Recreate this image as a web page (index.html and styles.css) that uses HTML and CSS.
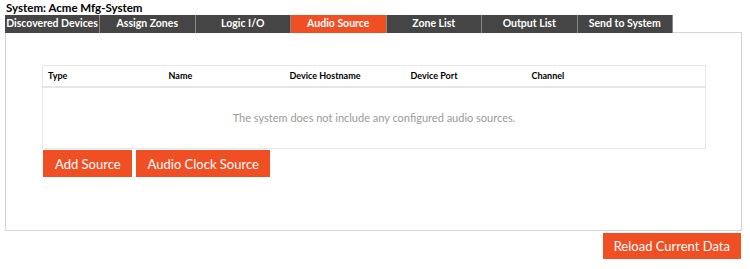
FILE: index.html
```html
<!DOCTYPE html>
<html lang="en">
<head>
  <meta charset="UTF-8" />
  <meta name="viewport" content="width=device-width, initial-scale=1.0" />
  <title>Audio Source</title>
  <link rel="stylesheet" href="styles.css">
</head>
<body>
  <div class="page">
    <div class="system-title">System: Acme Mfg-System</div>
    <nav class="tabs">
      <a href="#" class="tab">Discovered Devices</a>
      <a href="#" class="tab">Assign Zones</a>
      <a href="#" class="tab">Logic I/O</a>
      <a href="#" class="tab active">Audio Source</a>
      <a href="#" class="tab">Zone List</a>
      <a href="#" class="tab">Output List</a>
      <a href="#" class="tab">Send to System</a>
      <div class="tab-fill"></div>
    </nav>
    <section class="panel">
      <table class="sources">
        <thead>
          <tr>
            <th>Type</th>
            <th>Name</th>
            <th>Device Hostname</th>
            <th>Device Port</th>
            <th>Channel</th>
            <th></th>
          </tr>
        </thead>
        <tbody>
          <tr>
            <td colspan="6" class="empty">The system does not include any configured audio sources.</td>
          </tr>
        </tbody>
      </table>
      <div class="actions">
        <button class="btn-primary">Add Source</button>
        <button class="btn-primary">Audio Clock Source</button>
      </div>
    </section>
    <div class="footer">
      <button class="btn-primary reload">Reload Current Data</button>
    </div>
  </div>
</body>
</html>
```

FILE: styles.css
```css
* {
  box-sizing: border-box;
}
body {
  margin: 0;
  font-family: 'Lato', 'Open Sans', sans-serif;
  background-color: #FFFFFF;
  color: #000000;
}
.page {
  padding: 1px 8px 0 5px;
}
.system-title {
  font-size: 11.5px;
  font-weight: 700;
  line-height: 14px;
  padding-left: 1px;
}
.tabs {
  display: flex;
  height: 18px;
}
.tab {
  width: 96.5px;
  flex-shrink: 0;
  background-color: #454545;
  border-left: 1px solid #8A8A8A;
  border-right: 1px solid #8A8A8A;
  margin-right: -1px;
  color: #FFFFFF;
  font-size: 10.5px;
  font-weight: 700;
  line-height: 17px;
  text-align: center;
  text-decoration: none;
  white-space: nowrap;
}
.tab:first-child {
  border-left: none;
  width: 95px;
}
.tab.active {
  background-color: #F04E23;
}
.tab-fill {
  flex: 1;
  border-bottom: 1px solid #D4D4D4;
  margin-left: 1px;
}
.panel {
  border: 1px solid #D4D4D4;
  border-top: none;
  height: 198px;
  padding: 32px 36px 0 36px;
}
.sources {
  width: 664px;
  border-collapse: collapse;
  border: 1px solid #E6E6E6;
}
.sources th {
  width: 121px;
  text-align: left;
  font-size: 9px;
  font-weight: 700;
  padding: 0 5px;
  height: 21px;
  border-bottom: 2px solid #E6E6E6;
}
.sources th:last-child {
  width: auto;
}
.empty {
  height: 62px;
  text-align: center;
  color: #9A9A9A;
  font-size: 11px;
  padding-top: 1px;
}
.actions {
  display: flex;
  gap: 4px;
  padding-left: 1px;
  margin-top: 1px;
}
.btn-primary {
  background-color: #F04E23;
  color: #FFFFFF;
  font-family: 'Lato', 'Open Sans', sans-serif;
  font-size: 13px;
  border: none;
  height: 27px;
  padding: 0 11px 0 12px;
  cursor: pointer;
}
.footer {
  display: flex;
  justify-content: flex-end;
  padding-top: 2px;
  padding-right: 1px;
}
.reload {
  height: 26px;
  padding: 0 11px;
}
```
